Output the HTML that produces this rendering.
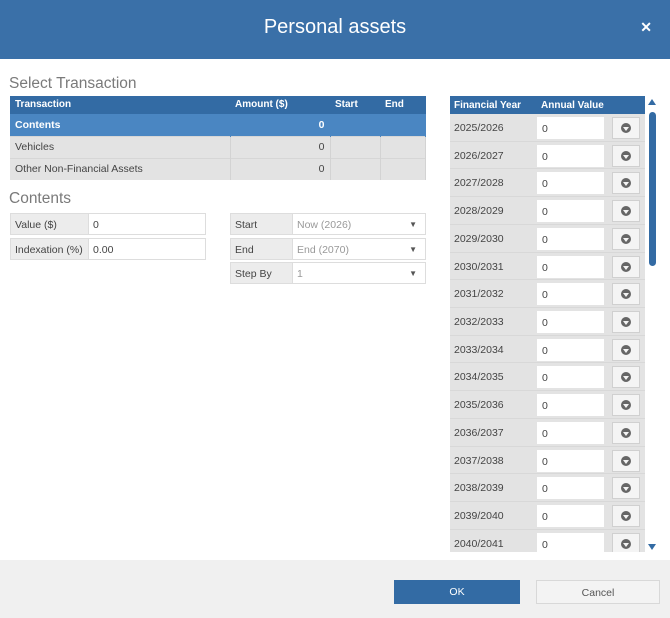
<!DOCTYPE html>
<html><head><style>
*{box-sizing:border-box;margin:0;padding:0}
body{width:670px;height:618px;overflow:hidden;background:#fff;font-family:"Liberation Sans",sans-serif;font-size:10.5px;color:#444;position:relative}
.hdr{position:absolute;left:0;top:0;width:670px;height:59px;background:#3a70a8;color:#fff}
.hdr h1{position:absolute;left:0;right:0;top:16px;text-align:center;font-weight:normal;font-size:20px}
.hdr .x{position:absolute;right:18px;top:19px;font-size:14px;font-weight:bold}
.abs{position:absolute}
h2{position:absolute;font-weight:normal;font-size:15.5px;color:#7a7a7a}
table{border-collapse:collapse}
.tt{position:absolute;left:10px;top:96px;width:416px}
.tt th{background:#336ba4;color:#fff;font-weight:bold;height:18px;text-align:left;padding-left:5px;font-size:10px}
.tt td{height:22px;background:#e3e3e3;border-right:1px solid #d3d3d3;border-top:1px solid #d6d6d6;padding-left:5px}
.tt tr.sel td{background:#4a86c2;color:#fff;font-weight:bold;border-color:#4a86c2}
.f{position:absolute;height:22px;border:1px solid #ddd;display:flex}
.f .l{background:#ececec;padding:5px 4px;border-right:1px solid #ddd}
.f .v{padding:5px 4px;background:#fff;flex:1;position:relative}
.f .v.g{color:#999}
.f .v i{position:absolute;right:8px;top:6px;font-style:normal;font-size:8px;color:#555}
.ry{position:absolute;left:450px;top:96px;width:195px;height:456px;overflow:hidden;background:#e3e3e3}
.ry .h{height:18px;background:#336ba4;color:#fff;font-weight:bold;font-size:10px;padding:4px 0 0 4px}
.ry .h span{position:absolute;left:91px}
.row{position:relative;height:27.73px;border-bottom:1px solid #d8d8d8}
.row .y{position:absolute;left:4px;top:8px}
.row .in{position:absolute;left:87px;top:3px;width:67px;height:22px;background:#fff;padding:6px 5px}
.row .b{position:absolute;left:162px;top:3px;width:28px;height:22px;background:#f4f4f4;border:1px solid #d0d0d0}
.row .b:after{content:"";position:absolute;left:8px;top:5px;width:10px;height:10px;border-radius:50%;background:#666}
.row .b:before{content:"";position:absolute;left:10px;top:9px;border-left:3px solid transparent;border-right:3px solid transparent;border-top:4px solid #f4f4f4;z-index:2}
.ftr{position:absolute;left:0;top:560px;width:670px;height:58px;background:#f0f0f0}
.btn{position:absolute;top:20px;height:24px;text-align:center;padding-top:6px;font-size:10.5px}
</style></head><body>
<div class="hdr"><h1>Personal assets</h1><div class="x">✕</div></div>
<h2 style="left:9px;top:75px">Select Transaction</h2>
<table class="tt">
<tr><th style="width:220px">Transaction</th><th style="width:100px">Amount ($)</th><th style="width:50px">Start</th><th>End</th></tr>
<tr class="sel"><td>Contents</td><td style="text-align:right;padding-right:5px">0</td><td></td><td></td></tr>
<tr><td>Vehicles</td><td style="text-align:right;padding-right:5px">0</td><td></td><td></td></tr>
<tr><td>Other Non-Financial Assets</td><td style="text-align:right;padding-right:5px">0</td><td></td><td></td></tr>
</table>
<h2 style="left:9px;top:190px">Contents</h2>
<div class="f" style="left:10px;top:213px;width:196px"><div class="l" style="width:78px">Value ($)</div><div class="v">0</div></div>
<div class="f" style="left:10px;top:238px;width:196px"><div class="l" style="width:78px">Indexation (%)</div><div class="v">0.00</div></div>
<div class="f" style="left:230px;top:213px;width:196px"><div class="l" style="width:62px">Start</div><div class="v g">Now (2026)<i>▼</i></div></div>
<div class="f" style="left:230px;top:238px;width:196px"><div class="l" style="width:62px">End</div><div class="v g">End (2070)<i>▼</i></div></div>
<div class="f" style="left:230px;top:262px;width:196px"><div class="l" style="width:62px">Step By</div><div class="v g">1<i>▼</i></div></div>
<div class="ry"><div class="h">Financial Year<span>Annual Value</span></div>
<div class="row"><span class="y">2025/2026</span><div class="in">0</div><div class="b"></div></div>
<div class="row"><span class="y">2026/2027</span><div class="in">0</div><div class="b"></div></div>
<div class="row"><span class="y">2027/2028</span><div class="in">0</div><div class="b"></div></div>
<div class="row"><span class="y">2028/2029</span><div class="in">0</div><div class="b"></div></div>
<div class="row"><span class="y">2029/2030</span><div class="in">0</div><div class="b"></div></div>
<div class="row"><span class="y">2030/2031</span><div class="in">0</div><div class="b"></div></div>
<div class="row"><span class="y">2031/2032</span><div class="in">0</div><div class="b"></div></div>
<div class="row"><span class="y">2032/2033</span><div class="in">0</div><div class="b"></div></div>
<div class="row"><span class="y">2033/2034</span><div class="in">0</div><div class="b"></div></div>
<div class="row"><span class="y">2034/2035</span><div class="in">0</div><div class="b"></div></div>
<div class="row"><span class="y">2035/2036</span><div class="in">0</div><div class="b"></div></div>
<div class="row"><span class="y">2036/2037</span><div class="in">0</div><div class="b"></div></div>
<div class="row"><span class="y">2037/2038</span><div class="in">0</div><div class="b"></div></div>
<div class="row"><span class="y">2038/2039</span><div class="in">0</div><div class="b"></div></div>
<div class="row"><span class="y">2039/2040</span><div class="in">0</div><div class="b"></div></div>
<div class="row"><span class="y">2040/2041</span><div class="in">0</div><div class="b"></div></div>
</div>
<div class="abs" style="left:648px;top:99px;border-left:4px solid transparent;border-right:4px solid transparent;border-bottom:6px solid #336ba4"></div>
<div class="abs" style="left:649px;top:112px;width:7px;height:154px;background:#336ba4;border-radius:4px"></div>
<div class="abs" style="left:648px;top:544px;border-left:4px solid transparent;border-right:4px solid transparent;border-top:6px solid #336ba4"></div>
<div class="ftr">
<div class="btn" style="left:394px;width:126px;background:#336ba4;color:#fff">OK</div>
<div class="btn" style="left:536px;width:124px;background:#f3f3f3;border:1px solid #d8d8d8;color:#555">Cancel</div>
</div>
</body></html>
